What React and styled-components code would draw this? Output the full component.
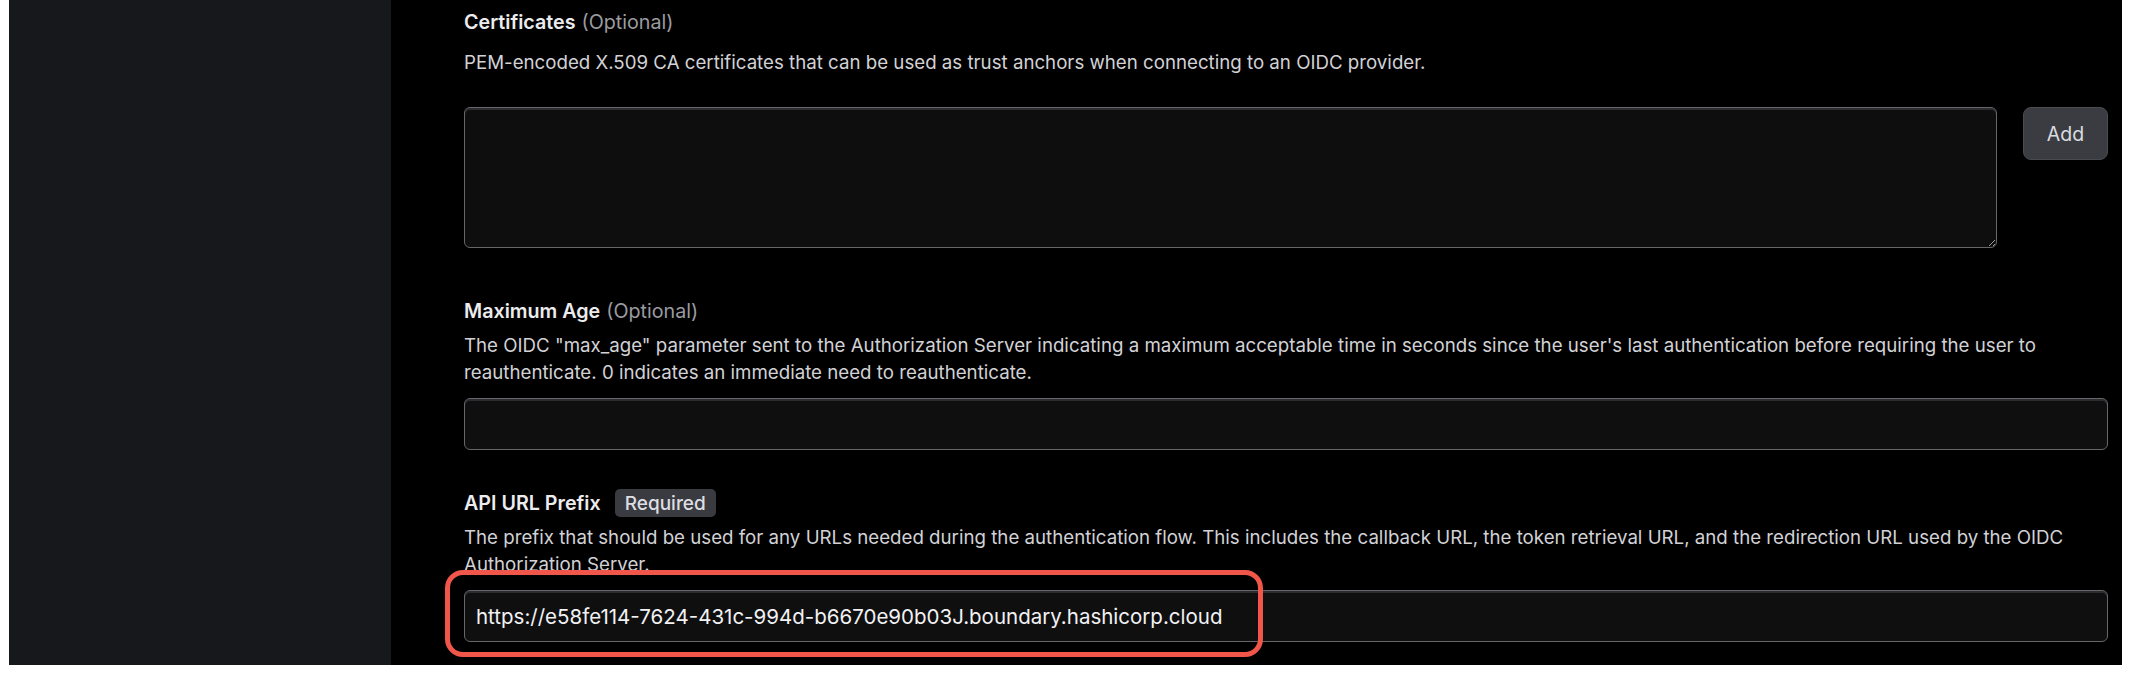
import styled, { createGlobalStyle } from "styled-components";

const GlobalStyle = createGlobalStyle`
  html, body {
    margin: 0;
    padding: 0;
    background: #ffffff;
  }
  body {
    font-family: Inter, "Noto Sans", "Liberation Sans", sans-serif;
  }
`;

const Frame = styled.div`
  display: flex;
  width: 2113px;
  height: 665px;
  margin-left: 9px;
  overflow: hidden;
`;

const Sidebar = styled.aside`
  width: 382px;
  flex-shrink: 0;
  background-color: #16181c;
`;

const Main = styled.main`
  flex: 1;
  background-color: #000000;
  padding: 9px 14px 0 73px;
  color-scheme: dark;
`;

const Field = styled.section`
  margin-top: ${(p) => p.gap || 0}px;
`;

const Label = styled.div`
  display: flex;
  align-items: center;
  gap: 10px;
  font-size: 19.7px;
  line-height: 27px;
  font-weight: 600;
  color: #ececee;
`;

const Optional = styled.span`
  font-weight: 400;
  color: #9b9ba0;
  margin-left: -4px;
`;

const Badge = styled.span`
  display: inline-flex;
  align-items: center;
  height: 28px;
  margin-left: 4px;
  padding: 0 10px;
  border-radius: 5px;
  background-color: #3a3b40;
  color: #dedee2;
  font-size: 19px;
  font-weight: 500;
`;

const Help = styled.p`
  margin: ${(p) => p.top || 7}px -30px 0 0;
  font-size: 18.7px;
  line-height: 27px;
  color: #d2d2d6;
`;

const Row = styled.div`
  display: flex;
  align-items: flex-start;
  gap: 26px;
  margin-top: ${(p) => p.top || 12}px;
`;

const TextArea = styled.textarea`
  width: 1533px;
  height: 141px;
  box-sizing: border-box;
  background-color: #0e0e0f;
  border: 1px solid #66666b;
  border-radius: 6px;
  box-shadow: inset 0 2px 0 #2c2c30;
  color: #e8e8ea;
  font-family: inherit;
  font-size: 18px;
  outline: none;
  resize: vertical;
`;

const Button = styled.button`
  width: 85px;
  height: 53px;
  background-color: #3b3c41;
  border: 1px solid #4a4b50;
  border-radius: 8px;
  color: #dcdce0;
  font-family: inherit;
  font-size: 19.5px;
  cursor: pointer;
`;

const InputWrap = styled.div`
  position: relative;
  margin-top: 12px;
`;

const Input = styled.input`
  display: block;
  width: 100%;
  height: 52px;
  box-sizing: border-box;
  padding: 0 11px;
  background-color: #0f0f10;
  border: 1px solid #66666b;
  border-radius: 6px;
  box-shadow: inset 0 2px 0 #2c2c30;
  color: #f2f2f4;
  font-family: inherit;
  font-size: 20.5px;
  outline: none;
`;

const Highlight = styled.div`
  position: absolute;
  left: -19px;
  top: -20px;
  width: 818px;
  height: 87px;
  box-sizing: border-box;
  border: 5px solid #f0564a;
  border-radius: 18px;
  pointer-events: none;
`;

const App = () => {
  return (
    <>
      <GlobalStyle />
      <Frame>
        <Sidebar />
        <Main>
          <Field>
            <Label>
              Certificates <Optional>(Optional)</Optional>
            </Label>
            <Help top={13}>
              PEM-encoded X.509 CA certificates that can be used as trust anchors when connecting to an OIDC provider.
            </Help>
            <Row top={31}>
              <TextArea />
              <Button>Add</Button>
            </Row>
          </Field>

          <Field gap={50}>
            <Label>
              Maximum Age <Optional>(Optional)</Optional>
            </Label>
            <Help>
              The OIDC "max_age" parameter sent to the Authorization Server indicating a maximum acceptable time in
              seconds since the user's last authentication before requiring the user to reauthenticate. 0 indicates an
              immediate need to reauthenticate.
            </Help>
            <InputWrap>
              <Input />
            </InputWrap>
          </Field>

          <Field gap={39}>
            <Label>
              API URL Prefix <Badge>Required</Badge>
            </Label>
            <Help>
              The prefix that should be used for any URLs needed during the authentication flow. This includes the
              callback URL, the token retrieval URL, and the redirection URL used by the OIDC Authorization Server.
            </Help>
            <InputWrap>
              <Input defaultValue="https://e58fe114-7624-431c-994d-b6670e90b03J.boundary.hashicorp.cloud" />
              <Highlight />
            </InputWrap>
          </Field>
        </Main>
      </Frame>
    </>
  );
};

export default App;
